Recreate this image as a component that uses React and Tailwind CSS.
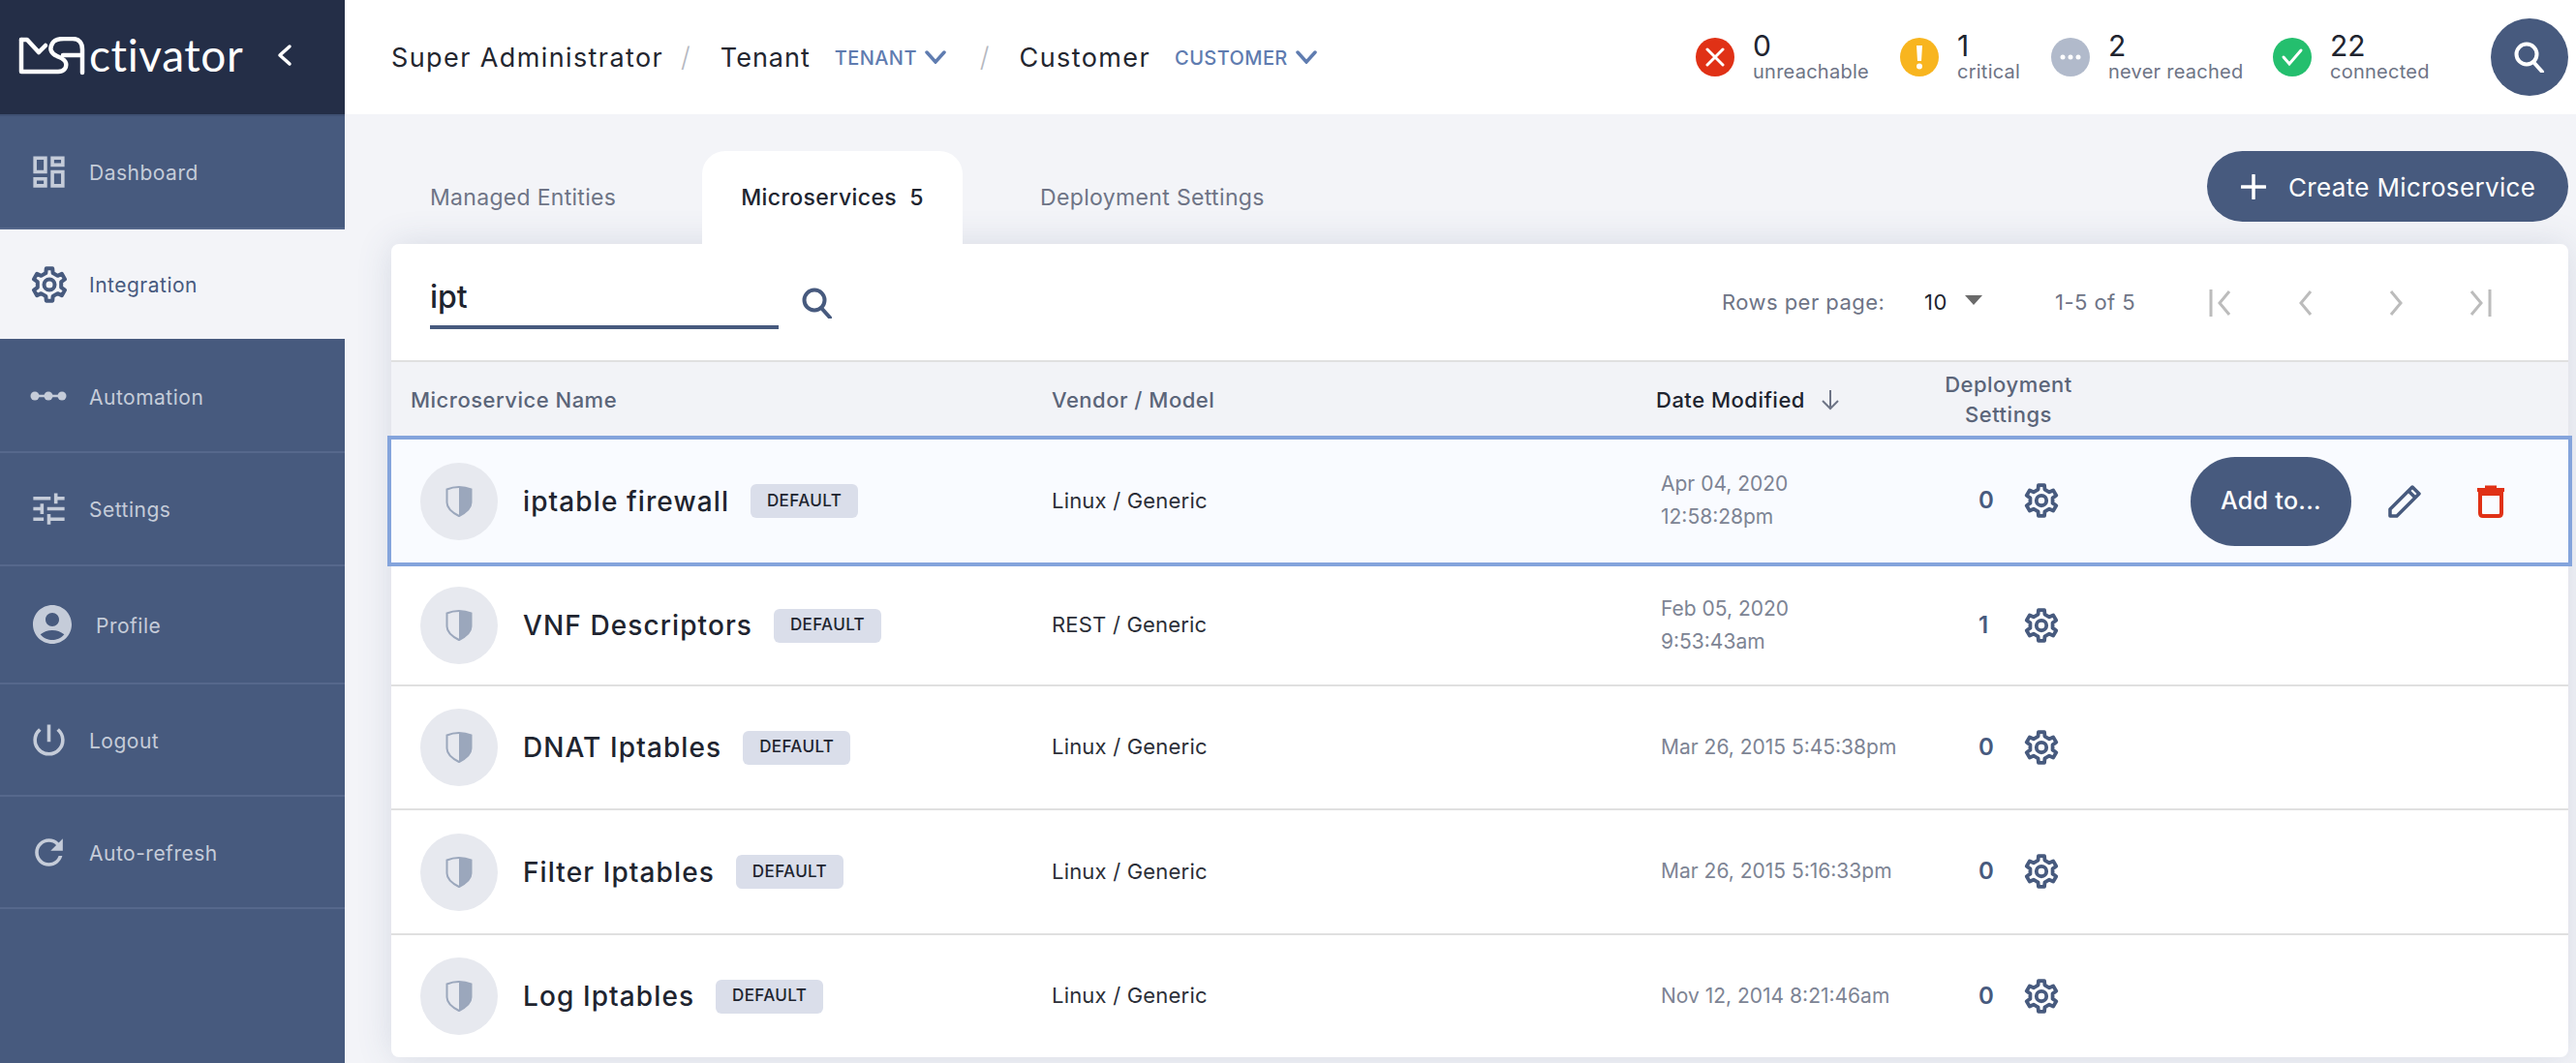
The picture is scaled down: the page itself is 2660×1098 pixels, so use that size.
import React from "react";
import { MdOutlineDashboard, MdTune, MdAccountCircle, MdPowerSettingsNew, MdRefresh } from "react-icons/md";

function gearPath() {
  const pts = [];
  const R = 17;
  const r = 12.5;
  const pt = (rad, deg) => {
    const a = (deg * Math.PI) / 180;
    return `${(rad * Math.cos(a)).toFixed(2)} ${(rad * Math.sin(a)).toFixed(2)}`;
  };
  for (let i = 0; i < 6; i++) {
    const c = -90 + 60 * i;
    pts.push(pt(r, c - 17), pt(R, c - 11), pt(R, c + 11), pt(r, c + 17));
  }
  return "M" + pts.join(" L") + " Z";
}
const GEAR = gearPath();

function Gear({ className }) {
  return (
    <svg viewBox="-20 -20 40 40" className={className} fill="none" stroke="currentColor">
      <path d={GEAR} strokeWidth="4" strokeLinejoin="round" />
      <circle r="5.500" strokeWidth="4" />
    </svg>
  );
}

function Shield() {
  return (
    <svg width="28" height="32" viewBox="0 0 28 32" className="shrink-0">
      <path d="M14 1 C9 1 5 2 1.500 3.500 V17 C1.500 23 8 28 14 31 C20 28 26.500 23 26.500 17 V3.500 C23 2 19 1 14 1 Z" fill="none" stroke="#9ba7bc" strokeWidth="2" />
      <path d="M14 1 C19 1 23 2 27 3.500 V17 C27 23 20 28 14 31 Z" fill="#9ba7bc" />
    </svg>
  );
}

function Search({ className, stroke }) {
  return (
    <svg viewBox="0 0 32 32" className={className} fill="none" stroke={stroke} strokeWidth="4">
      <circle cx="13" cy="13" r="10.500" />
      <path d="M20 21 L29 31" strokeLinecap="round" />
    </svg>
  );
}

const nav = [
  { label: "Dashboard", Icon: MdOutlineDashboard, h: "h-[117px]" },
  { label: "Integration", h: "h-[115px]", active: true, gear: true },
  { label: "Automation", h: "h-[116px]", dots: true },
  { label: "Settings", Icon: MdTune, h: "h-[117px]" },
  { label: "Profile", Icon: MdAccountCircle, h: "h-[122px]", profile: true },
  { label: "Logout", Icon: MdPowerSettingsNew, h: "h-[116px]" },
  { label: "Auto-refresh", Icon: MdRefresh, h: "h-[116px]" },
];

function Sidebar() {
  return (
    <aside className="w-[356px] shrink-0 bg-[#475a7e] flex flex-col">
      <div className="h-[120px] bg-[#242e47] border-b-2 border-[#3f5173] flex items-center pl-[19px] text-white">
        <svg width="72" height="40" viewBox="0 0 72 40" fill="none" stroke="white" strokeWidth="4.500" strokeLinecap="round" strokeLinejoin="round" className="shrink-0 -mt-[2px]">
          <path d="M3 3 V36 H41 C48 36 50 31 49 27 C48 23 44 22 40 20 C33 17 32 12 35 7 C37 3 41 2 47 2 H56 C63 2 66 7 66 13 V37" />
          <path d="M3 3 H9 L21 16 L28 9" />
          <path d="M46 19 H65" />
        </svg>
        <span className="text-[46px] font-normal leading-none tracking-[0.6px] ml-[1px] -mt-[5px] [font-family:'Lato',sans-serif]">ctivator</span>
        <svg width="16" height="24" viewBox="0 0 16 24" fill="none" stroke="white" strokeWidth="3.500" strokeLinecap="round" strokeLinejoin="round" className="ml-[35px] shrink-0 -mt-[4px]">
          <path d="M13 3 L3 12 L13 21" />
        </svg>
      </div>
      {nav.map((n) => (
        <div key={n.label} className={`${n.h} flex items-center shrink-0 border-b-2 ${n.active ? "bg-[#f3f4f8] text-[#475a7e] border-[#475a7e]" : "text-[#c5ccd9] border-[#56688c]"}`}>
          <div className={`${n.profile ? "w-[99px] pl-[31px]" : "w-[92px] pl-[32px]"} flex shrink-0`}>
            {n.dots ? (
              <svg width="38" height="12" viewBox="0 0 38 12" className="-ml-[1px]">
                <path d="M2 6 H36" stroke="currentColor" strokeWidth="2.500" />
                <circle cx="5" cy="6" r="4.500" fill="currentColor" />
                <circle cx="19" cy="6" r="4.500" fill="currentColor" />
                <circle cx="33" cy="6" r="4.500" fill="currentColor" />
              </svg>
            ) : n.gear ? (
              <Gear className="w-[40px] h-[40px] -ml-[1px]" />
            ) : (
              <n.Icon className={n.profile ? "w-[48px] h-[48px] -ml-[1px]" : "w-[43px] h-[43px] -ml-[3px]"} />
            )}
          </div>
          <span className="text-[21px] tracking-[0.5px] pt-[3px] [font-family:'Inter',sans-serif]">{n.label}</span>
        </div>
      ))}
    </aside>
  );
}

function Stat({ color, n, label, w, icon }) {
  return (
    <div className={`flex items-center ${w}`}>
      <div className="w-[40px] h-[40px] rounded-full flex items-center justify-center shrink-0" style={{ backgroundColor: color }}>{icon}</div>
      <div className="ml-[19px] flex flex-col">
        <span className="text-[30px] leading-[30px] text-[#20242f]">{n}</span>
        <span className="text-[20px] tracking-[0.25px] leading-[24px] text-[#6e7486]">{label}</span>
      </div>
    </div>
  );
}

function Chevron() {
  return (
    <svg width="22" height="14" viewBox="0 0 22 14" fill="none" stroke="#5f7cb0" strokeWidth="3.500" strokeLinecap="round" className="ml-[8px]">
      <path d="M2 2 L11 12 L20 2" />
    </svg>
  );
}

function TopBar() {
  return (
    <header className="h-[118px] bg-white flex items-center shrink-0 pl-[48px] pr-[8px]">
      <span className="text-[27px] tracking-[1.4px] text-[#23262f] pt-[2px]">Super Administrator</span>
      <span className="ml-[18px] text-[28px] text-[#b5b8bf] font-light">/</span>
      <span className="ml-[31px] text-[27px] tracking-[1px] text-[#23262f] pt-[2px]">Tenant</span>
      <span className="ml-[25px] text-[20px] font-medium tracking-[0.4px] text-[#5f7cb0] pt-[1px]">TENANT</span>
      <Chevron />
      <span className="ml-[35px] text-[28px] text-[#b5b8bf] font-light">/</span>
      <span className="ml-[31px] text-[27px] tracking-[1.4px] text-[#23262f] pt-[2px]">Customer</span>
      <span className="ml-[25px] text-[20px] font-medium tracking-[0.4px] text-[#5f7cb0] pt-[1px]">CUSTOMER</span>
      <Chevron />
      <div className="ml-auto flex items-center">
        <Stat w="w-[211px]" color="#e03116" n="0" label="unreachable" icon={
          <svg width="22" height="22" viewBox="0 0 22 22" stroke="white" strokeWidth="3" strokeLinecap="round"><path d="M3 3 L19 19 M19 3 L3 19" /></svg>} />
        <Stat w="w-[156px]" color="#f8b51f" n="1" label="critical" icon={
          <svg width="8" height="26" viewBox="0 0 8 26" fill="white"><path d="M1 1 H7 L6 17 H2 Z" /><circle cx="4" cy="22.500" r="3" /></svg>} />
        <Stat w="w-[229px]" color="#b1bacb" n="2" label="never reached" icon={
          <svg width="22" height="6" viewBox="0 0 22 6" fill="white"><circle cx="3" cy="3" r="2.500" /><circle cx="11" cy="3" r="2.500" /><circle cx="19" cy="3" r="2.500" /></svg>} />
        <Stat w="w-[225px]" color="#24bf6e" n="22" label="connected" icon={
          <svg width="24" height="20" viewBox="0 0 24 20" fill="none" stroke="white" strokeWidth="3" strokeLinecap="round"><path d="M3 10 L9 17 L21 3" /></svg>} />
        <button className="w-[80px] h-[80px] rounded-full bg-[#475a7e] flex items-center justify-center">
          <Search className="w-[32px] h-[32px]" stroke="white" />
        </button>
      </div>
    </header>
  );
}

function Tabs() {
  return (
    <div className="flex mt-[38px] h-[96px] shrink-0 relative z-10">
      <div className="w-[321px] pl-[40px] pt-[31px] text-[23px] tracking-[0.3px] text-[#6e7486]">Managed Entities</div>
      <div className="w-[269px] bg-white rounded-t-[24px] flex justify-center pt-[31px] text-[23px] tracking-[0.4px] font-medium text-[#20242f]">Microservices&nbsp;&nbsp;5</div>
      <div className="pl-[80px] pt-[31px] text-[23px] tracking-[0.35px] text-[#6e7486]">Deployment Settings</div>
      <button className="ml-auto w-[373px] h-[73px] rounded-[37px] bg-[#475a7e] flex items-center pl-[35px] pt-[1px] text-white text-[26px] tracking-[0.35px]">
        <svg width="26" height="26" viewBox="0 0 26 26" stroke="white" strokeWidth="3.500" strokeLinecap="round" className="mr-[23px]"><path d="M13 1 V25 M1 13 H25" /></svg>
        Create Microservice
      </button>
    </div>
  );
}

function PageIcon({ d }) {
  return (
    <svg width="24" height="30" viewBox="0 0 24 30" fill="none" stroke="#bcbcbc" strokeWidth="3"><path d={d} /></svg>
  );
}

function Toolbar() {
  return (
    <div className="h-[120px] flex items-center pl-[40px]">
      <div className="w-[360px] h-[88px] border-b-4 border-[#475a7e] flex items-center pt-[26px] self-start">
        <span className="text-[32px] font-medium text-[#20242f]">ipt</span>
      </div>
      <Search className="ml-[24px] w-[32px] h-[32px] mt-[2px]" stroke="#475a7e" />
      <div className="ml-auto flex items-center text-[22px] tracking-[0.45px] text-[#6e7486] pt-[1px]">
        <span className="w-[209px]">Rows per page:</span>
        <span className="text-[#20242f] w-[42px]">10</span>
        <svg width="18" height="10" viewBox="0 0 18 10" fill="#6a6a6a" className="-mt-[6px]"><path d="M0 0 H18 L9 10 Z" /></svg>
        <span className="ml-[75px] w-[158px]">1-5 of 5</span>
        <PageIcon d="M3 1 V29 M22 3 L12 15 L22 27" />
        <span className="w-[62px]"></span>
        <PageIcon d="M20 3 L10 15 L20 27" />
        <span className="w-[75px]"></span>
        <PageIcon d="M4 3 L14 15 L4 27" />
        <span className="w-[61px]"></span>
        <PageIcon d="M2 3 L12 15 L2 27 M21 1 V29" />
        <span className="w-[78px]"></span>
      </div>
    </div>
  );
}

const rows = [
  { name: "iptable firewall", vm: "Linux / Generic", date: ["Apr 04, 2020", "12:58:28pm"], n: "0", h: "h-[135px]", active: true },
  { name: "VNF Descriptors", vm: "REST / Generic", date: ["Feb 05, 2020", "9:53:43am"], n: "1", h: "h-[124px]" },
  { name: "DNAT Iptables", vm: "Linux / Generic", date: ["Mar 26, 2015 5:45:38pm"], n: "0", h: "h-[128px]" },
  { name: "Filter Iptables", vm: "Linux / Generic", date: ["Mar 26, 2015 5:16:33pm"], n: "0", h: "h-[129px]" },
  { name: "Log Iptables", vm: "Linux / Generic", date: ["Nov 12, 2014 8:21:46am"], n: "0", h: "h-[126px]", last: true },
];

function Row({ r }) {
  return (
    <div className={`${r.h} flex items-center shrink-0 ${r.active ? "bg-[#f9fbff] border-4 border-[#84a4dc] -mx-[4px] relative" : r.last ? "" : "border-b-2 border-[#e0e0e0]"}`}>
      <div className="ml-[30px] w-[80px] h-[80px] rounded-full bg-[#e7e9ef] flex items-center justify-center shrink-0">
        <Shield />
      </div>
      <div className="ml-[26px] w-[546px] flex items-center shrink-0">
        <span className="text-[28px] font-medium tracking-[1.1px] text-[#20242f]">{r.name}</span>
        <span className="ml-[22px] w-[111px] h-[35px] rounded-[6px] bg-[#dadeea] flex items-center justify-center text-[17px] font-medium tracking-[0.4px] text-[#20242f]">DEFAULT</span>
      </div>
      <div className="w-[629px] shrink-0 text-[22px] tracking-[0.2px] text-[#2c2f38] -mt-[1px]">{r.vm}</div>
      <div className="w-[328px] shrink-0 text-[21px] leading-[34px] text-[#7d8494] -mt-[1px]">
        {r.date.map((d) => <div key={d}>{d}</div>)}
      </div>
      <div className="w-[46px] shrink-0 text-[24px] font-semibold text-[#475a7e] -mt-[1px]">{r.n}</div>
      <Gear className="w-[38px] h-[38px] shrink-0 text-[#475a7e] -mt-[1px]" />
      {r.active && (
        <div className="ml-[135px] flex items-center">
          <button className="w-[166px] h-[92px] rounded-[46px] bg-[#475a7e] text-white text-[25px] tracking-[0.3px] font-medium">Add to...</button>
          <svg width="34" height="34" viewBox="0 0 34 34" fill="none" stroke="#475a7e" strokeWidth="3.500" strokeLinejoin="round" className="ml-[38px]"><path d="M2 32 V25 L25 2 L32 9 L9 32 Z M21 6 L28 13" /></svg>
          <svg width="28" height="34" viewBox="0 0 28 34" className="ml-[58px]"><path d="M0 3 H28 V7 H0 Z M8 0.500 H20 V3 H8 Z" fill="#e03116" /><path d="M3 9 V29 C3 31 4 32 6 32 H22 C24 32 25 31 25 29 V9 Z" fill="none" stroke="#e03116" strokeWidth="4" /></svg>
        </div>
      )}
    </div>
  );
}

function Table() {
  return (
    <div className="bg-white rounded-[8px] shadow-[0_0_36px_rgba(71,90,126,0.16)] flex flex-col h-[840px] shrink-0">
      <Toolbar />
      <div className="h-[78px] border-t-2 border-[#e0e0e0] bg-[#f2f3f7] flex items-center shrink-0 text-[22px] tracking-[0.5px] font-medium pt-[2px]">
        <span className="ml-[20px] w-[662px] text-[#5b6579]">Microservice Name</span>
        <span className="w-[624px] text-[#5b6579]">Vendor / Model</span>
        <span className="text-[#20242f] w-[170px]">Date Modified</span>
        <svg width="20" height="22" viewBox="0 0 20 22" fill="none" stroke="#6e7486" strokeWidth="2"><path d="M10 1 V20 M2 12 L10 20 L18 12" /></svg>
        <span className="ml-[94px] w-[160px] text-center leading-[31px] text-[#5b6579]">Deployment Settings</span>
      </div>
      {rows.map((r) => <Row key={r.name} r={r} />)}
    </div>
  );
}

export default function App() {
  return (
    <div className="w-[2660px] h-[1098px] overflow-hidden flex bg-[#f3f4f8] [font-family:'Inter',sans-serif]">
      <Sidebar />
      <main className="flex-1 flex flex-col min-w-0">
        <TopBar />
        <div className="pl-[48px] pr-[8px] flex flex-col">
          <Tabs />
          <Table />
        </div>
      </main>
    </div>
  );
}
